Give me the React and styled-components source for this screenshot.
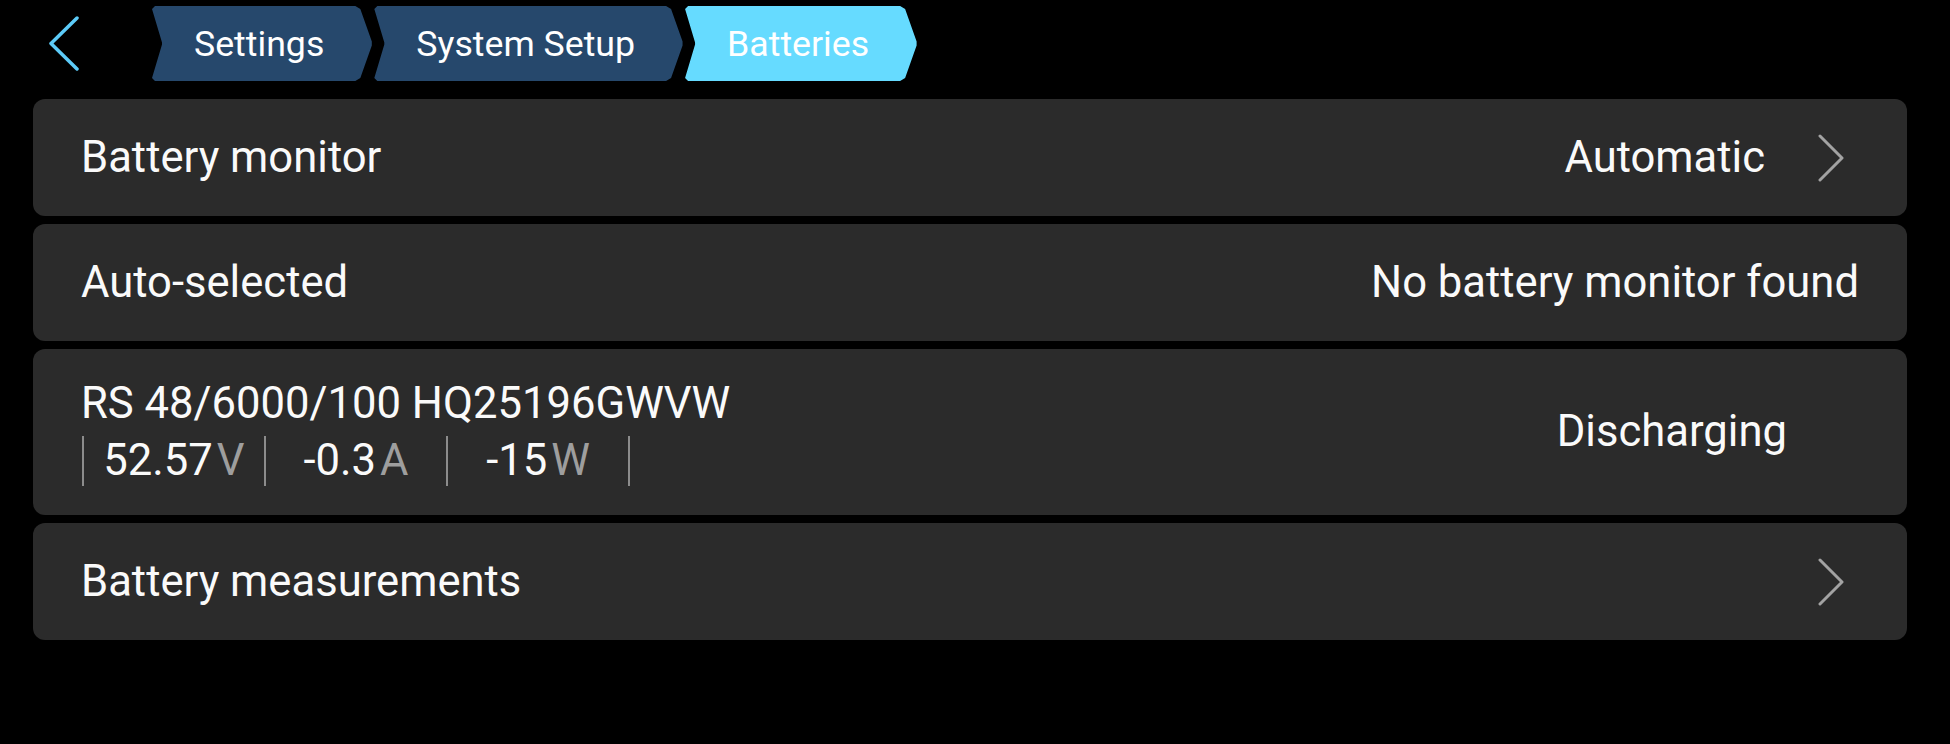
import React from "react";
import styled, { createGlobalStyle } from "styled-components";

const Global = createGlobalStyle`
  html, body { margin: 0; padding: 0; background: #000; }
  body { font-family: Roboto, "Noto Sans", sans-serif; color: #fafafa; }
`;

const Page = styled.div`
  width: 1950px;
  height: 744px;
  background: #000;
  padding: 6px 43px 0 33px;
  box-sizing: border-box;
`;

const TopBar = styled.div`
  display: flex;
  align-items: center;
  height: 75px;
  margin-bottom: 18px;
`;

const BackButton = styled.div`
  width: 118px;
  height: 75px;
  display: flex;
  align-items: center;
  padding-left: 16px;
  box-sizing: border-box;
`;

const Crumbs = styled.div`
  display: flex;
  align-items: center;
  gap: 1px;
`;

const Crumb = styled.div`
  height: 75px;
  display: flex;
  align-items: center;
  padding: 0 48px 0 43px;
  font-size: 35.7px;
  color: #fff;
  background: ${(p) => (p.$active ? "#66dbff" : "#26486c")};
  clip-path: polygon(
    4px 0,
    calc(100% - 17px) 0,
    calc(100% - 12px) 3px,
    calc(100% - 0.5px) calc(50% - 2px),
    calc(100% - 0.5px) calc(50% + 2px),
    calc(100% - 12px) calc(100% - 3px),
    calc(100% - 17px) 100%,
    4px 100%,
    1px calc(100% - 3px),
    11px calc(50% + 1px),
    11px calc(50% - 1px),
    1px 3px
  );
`;

const List = styled.div`
  display: flex;
  flex-direction: column;
  gap: 8px;
`;

const Card = styled.div`
  background: #2b2b2b;
  border-radius: 12px;
  min-height: ${(p) => (p.$tall ? "166px" : "117px")};
  box-sizing: border-box;
  display: flex;
  align-items: center;
  padding: 0 48px 0 48px;
  font-size: 43.6px;
  line-height: 50px;
`;

const Label = styled.div`
  flex: 1;
  display: flex;
  flex-direction: column;
  gap: 7px;
`;

const Value = styled.div`
  color: #fafafa;
  margin-right: ${(p) => p.$mr || 0}px;
`;

const Chevron = styled.svg`
  margin-left: 53px;
  margin-right: 15px;
  flex: none;
`;

const Quantities = styled.div`
  display: flex;
  height: 50px;
  align-items: center;
  margin-left: 1px;
`;

const Cell = styled.div`
  width: 180px;
  height: 50px;
  display: flex;
  align-items: center;
  justify-content: center;
  border-left: 2px solid #8c8c8c;
  &:last-child { border-right: 2px solid #8c8c8c; }
`;

const Unit = styled.span`
  color: #9e9e9e;
  margin-left: 4px;
`;

const RightChevron = () => (
  <Chevron width="26" height="48" viewBox="0 0 26 48">
    <polyline points="2,2 24,24 2,46" fill="none" stroke="#a3a3a3" strokeWidth="3" strokeLinecap="round" strokeLinejoin="round" />
  </Chevron>
);

export default function App() {
  return (
    <>
      <Global />
      <Page>
        <TopBar>
          <BackButton>
            <svg width="32" height="56" viewBox="0 0 32 56">
              <polyline points="28,2 2,27.5 28,53" fill="none" stroke="#5ccbf8" strokeWidth="3.5" strokeLinecap="round" strokeLinejoin="round" />
            </svg>
          </BackButton>
          <Crumbs>
            <Crumb>Settings</Crumb>
            <Crumb>System Setup</Crumb>
            <Crumb $active>Batteries</Crumb>
          </Crumbs>
        </TopBar>
        <List>
          <Card>
            <Label>Battery monitor</Label>
            <Value>Automatic</Value>
            <RightChevron />
          </Card>
          <Card>
            <Label>Auto-selected</Label>
            <Value>No battery monitor found</Value>
          </Card>
          <Card $tall>
            <Label>
              <div>RS 48/6000/100 HQ25196GWVW</div>
              <Quantities>
                <Cell>52.57<Unit>V</Unit></Cell>
                <Cell>-0.3<Unit>A</Unit></Cell>
                <Cell>-15<Unit>W</Unit></Cell>
              </Quantities>
            </Label>
            <Value $mr={72}>Discharging</Value>
          </Card>
          <Card>
            <Label>Battery measurements</Label>
            <RightChevron />
          </Card>
        </List>
      </Page>
    </>
  );
}
